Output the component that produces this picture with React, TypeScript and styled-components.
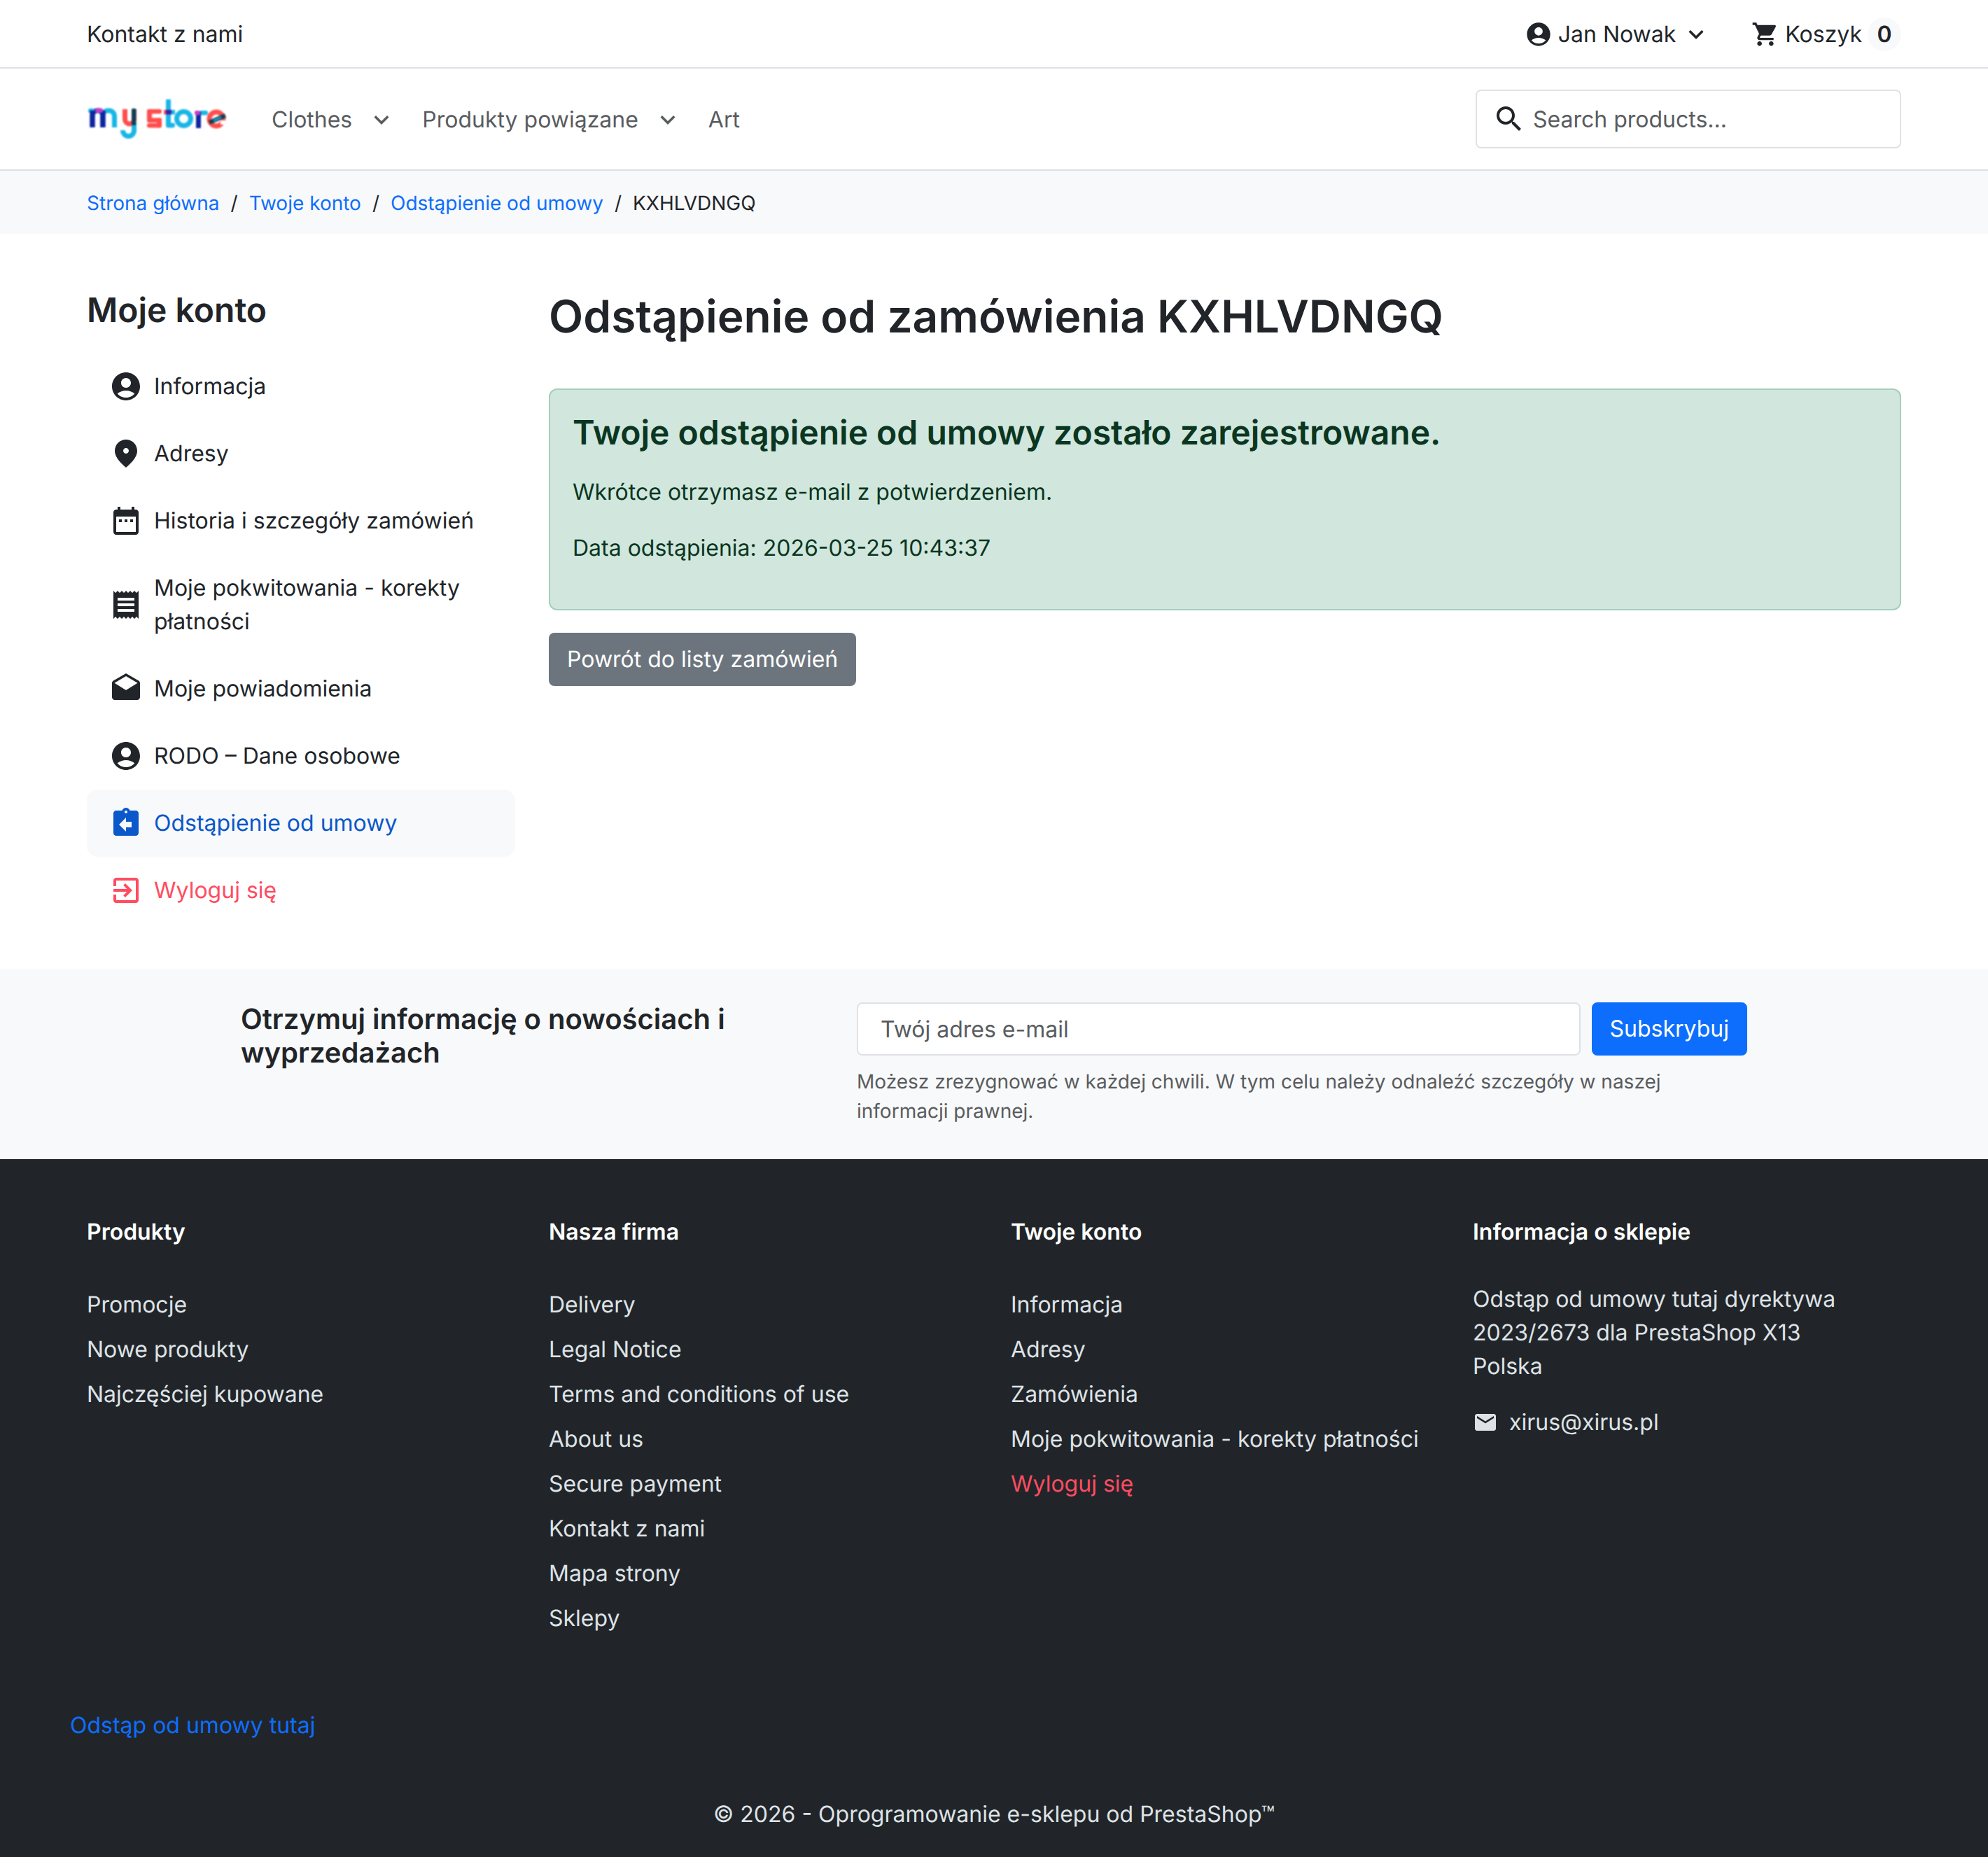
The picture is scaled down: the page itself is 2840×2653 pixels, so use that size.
import React from "react";
import styled, { createGlobalStyle } from "styled-components";

const Global = createGlobalStyle`
  html, body { margin: 0; padding: 0; background: #fff; }
  body { font-family: Inter, "Noto Sans", sans-serif; font-size: 32px; line-height: 48px; color: #212529; text-rendering: geometricPrecision; }
  * { box-sizing: border-box; }
  a { text-decoration: none; color: inherit; }
  ul { list-style: none; margin: 0; padding: 0; }
`;

const P = {
  account: "M12 2C6.48 2 2 6.48 2 12s4.48 10 10 10 10-4.48 10-10S17.52 2 12 2zm0 4c1.93 0 3.5 1.57 3.5 3.5S13.93 13 12 13s-3.5-1.57-3.5-3.5S10.07 6 12 6zm0 14c-2.03 0-4.43-.82-6.14-2.88C7.55 15.8 9.68 15 12 15s4.45.8 6.14 2.12C16.43 19.18 14.03 20 12 20z",
  place: "M12 2c-4.2 0-8 3.22-8 8.2 0 3.32 2.67 7.25 8 11.8 5.33-4.55 8-8.48 8-11.8C20 5.22 16.2 2 12 2zm0 10c-1.1 0-2-.9-2-2s.9-2 2-2 2 .9 2 2-.9 2-2 2z",
  date: "M9 11H7v2h2v-2zm4 0h-2v2h2v-2zm4 0h-2v2h2v-2zm2-7h-1V2h-2v2H8V2H6v2H5c-1.11 0-1.99.9-1.99 2L3 20c0 1.1.89 2 2 2h14c1.1 0 2-.9 2-2V6c0-1.1-.9-2-2-2zm0 16H5V9h14v11z",
  receipt: "M18 17H6v-2h12v2zm0-4H6v-2h12v2zm0-4H6V7h12v2zM3 22l1.5-1.5L6 22l1.5-1.5L9 22l1.5-1.5L12 22l1.5-1.5L15 22l1.5-1.5L18 22l1.5-1.5L21 22V2l-1.5 1.5L18 2l-1.5 1.5L15 2l-1.5 1.5L12 2l-1.5 1.5L9 2 7.5 3.5 6 2 4.5 3.5 3 2v20z",
  drafts: "M21.99 8c0-.72-.37-1.35-.94-1.7L12 1 2.95 6.3C2.38 6.65 2 7.28 2 8v10c0 1.1.9 2 2 2h16c1.1 0 2-.9 2-2l-.01-10zM12 13L3.74 7.84 12 3l8.26 4.84L12 13z",
  assignReturn: "M19 3h-4.18C14.4 1.84 13.3 1 12 1c-1.3 0-2.4.84-2.82 2H5c-1.1 0-2 .9-2 2v14c0 1.1.9 2 2 2h14c1.1 0 2-.9 2-2V5c0-1.1-.9-2-2-2zm-7 0c.55 0 1 .45 1 1s-.45 1-1 1-1-.45-1-1 .45-1 1-1zm4 12h-4v3l-5-5 5-5v3h4v4z",
  exit: "M10.09 15.59L11.5 17l5-5-5-5-1.41 1.41L12.67 11H3v2h9.67l-2.58 2.59zM19 3H5c-1.11 0-2 .9-2 2v4h2V5h14v14H5v-4H3v4c0 1.1.89 2 2 2h14c1.1 0 2-.9 2-2V5c0-1.1-.9-2-2-2z",
  cart: "M7 18c-1.1 0-1.99.9-1.99 2S5.9 22 7 22s2-.9 2-2-.9-2-2-2zM1 2v2h2l3.6 7.59-1.35 2.45c-.16.28-.25.61-.25.96 0 1.1.9 2 2 2h12v-2H7.42c-.14 0-.25-.11-.25-.25l.03-.12.9-1.63h7.45c.75 0 1.41-.41 1.75-1.03l3.58-6.49c.08-.14.12-.31.12-.48 0-.55-.45-1-1-1H5.21l-.94-2H1zm16 16c-1.1 0-1.99.9-1.99 2s.89 2 1.99 2 2-.9 2-2-.9-2-2-2z",
  search: "M15.5 14h-.79l-.28-.27C15.41 12.59 16 11.11 16 9.5 16 5.91 13.09 3 9.5 3S3 5.91 3 9.5 5.91 16 9.5 16c1.61 0 3.09-.59 4.23-1.57l.27.28v.79l5 4.99L20.49 19l-4.99-5zm-6 0C7.01 14 5 11.99 5 9.5S7.01 5 9.5 5 14 7.01 14 9.5 11.99 14 9.5 14z",
  email: "M20 4H4c-1.1 0-1.99.9-1.99 2L2 18c0 1.1.9 2 2 2h16c1.1 0 2-.9 2-2V6c0-1.1-.9-2-2-2zm0 4l-8 5-8-5V6l8 5 8-5v2z",
  expand: "M16.59 8.59L12 13.17 7.41 8.59 6 10l6 6 6-6z",
};

const Svg = styled.svg<{ $size: number }>`
  width: ${(p) => p.$size}px;
  height: ${(p) => p.$size}px;
  flex: none;
  fill: currentColor;
  display: block;
`;
const Icon = ({ d, size = 48 }: { d: string; size?: number }) => (
  <Svg $size={size} viewBox="0 0 24 24" aria-hidden="true"><path d={d} /></Svg>
);

const Container = styled.div`
  width: 2640px;
  margin: 0 auto;
  padding: 0 24px;
`;

const TopBar = styled.div`
  border-bottom: 2px solid #dee2e6;
`;
const TopRow = styled(Container)`
  height: 96px;
  padding-top: 2px;
  display: flex;
  align-items: center;
  justify-content: space-between;
`;
const TopActions = styled.div`
  display: flex;
  align-items: center;
`;
const UserBox = styled.a`
  display: flex;
  align-items: center;
  gap: 8px;
  margin-right: 58px;
`;
const CartBox = styled.a`
  display: flex;
  align-items: center;
  gap: 8px;
`;
const CartBadge = styled.span`
  width: 48px;
  height: 48px;
  border-radius: 50%;
  background: #f8f9fa;
  font-weight: 600;
  display: flex;
  align-items: center;
  justify-content: center;
`;

const Header = styled.header`
  border-bottom: 2px solid #dee2e6;
`;
const HeaderRow = styled(Container)`
  height: 144px;
  display: flex;
  align-items: center;
`;
const LogoLink = styled.a`
  display: block;
  flex: none;
  margin-right: 64px;
`;
const LogoSvg = styled.svg`
  display: block;
  width: 200px;
  height: 90px;
  filter: blur(0.9px);
`;
const Nav = styled.nav`
  display: flex;
  align-items: center;
  color: #595c5f;
  padding-top: 2px;
`;
const NavItem = styled.a`
  display: flex;
  align-items: center;
  margin-right: 37px;
`;
const NavChevron = styled.span`
  display: flex;
  margin-left: 21px;
`;
const SearchBox = styled.label`
  margin-left: auto;
  width: 608px;
  height: 84px;
  border: 2px solid #dee2e6;
  border-radius: 8px;
  display: flex;
  align-items: center;
  gap: 10px;
  padding-left: 22px;
`;
const SearchInput = styled.input`
  flex: 1;
  min-width: 0;
  border: 0;
  outline: 0;
  background: transparent;
  font: inherit;
  color: #212529;
  padding: 2px 0 0;
  &::placeholder { color: #595c5f; opacity: 1; }
`;

const CrumbBar = styled.div`
  background: #f8f9fa;
  height: 90px;
`;
const CrumbList = styled(Container).attrs({ as: "ol" })`
  height: 90px;
  list-style: none;
  display: flex;
  align-items: center;
  font-size: 28px;
  margin: 0 auto;
  padding-top: 2px;
`;
const Crumb = styled.li<{ $current?: boolean }>`
  color: ${(p) => (p.$current ? "#212529" : "#0d6efd")};
  &:not(:first-child)::before {
    content: "/";
    color: #212529;
    padding: 0 16px;
  }
`;

const Body = styled(Container)`
  display: grid;
  grid-template-columns: 612px 1fr;
  column-gap: 48px;
  padding-top: 80px;
  padding-bottom: 64px;
`;
const SideTitle = styled.h2`
  margin: 0 0 32px;
  font-size: 48px;
  line-height: 58px;
  font-weight: 600;
`;
const SideItem = styled.a<{ $tone?: "active" | "danger" }>`
  display: flex;
  align-items: center;
  gap: 16px;
  padding: 24px 32px;
  border-radius: 16px;
  background: ${(p) => (p.$tone === "active" ? "#f8f9fa" : "transparent")};
  color: ${(p) => (p.$tone === "active" ? "#0a58ca" : p.$tone === "danger" ? "#ff4c61" : "#212529")};
`;

const Title = styled.h1`
  margin: 0 0 64px;
  font-size: 64px;
  line-height: 77px;
  font-weight: 600;
`;
const Alert = styled.div`
  background: #d1e7dd;
  border: 2px solid #a3cfbb;
  border-radius: 12px;
  color: #0a3622;
  padding: 32px 32px 31px;
  margin-bottom: 32px;
`;
const AlertHeading = styled.h4`
  margin: 0 0 32px;
  font-size: 48px;
  line-height: 58px;
  font-weight: 600;
`;
const AlertText = styled.p`
  margin: 0 0 32px;
`;
const BackButton = styled.a`
  display: inline-block;
  background: #6c757d;
  border: 2px solid #6c757d;
  border-radius: 8px;
  color: #fff;
  padding: 12px 24px;
`;

const Newsletter = styled.section`
  background: #f8f9fa;
  padding: 48px 0;
`;
const NewsRow = styled.div`
  width: 2152px;
  margin: 0 auto;
  display: grid;
  grid-template-columns: 880px 1fr;
`;
const NewsTitle = styled.div`
  font-size: 40px;
  line-height: 48px;
  font-weight: 600;
  width: 820px;
`;
const NewsForm = styled.div`
  display: flex;
  gap: 16px;
`;
const NewsInput = styled.input`
  flex: 1;
  min-width: 0;
  height: 76px;
  border: 2px solid #dee2e6;
  border-radius: 8px;
  background: #fff;
  padding: 0 32px;
  font: inherit;
  &::placeholder { color: #595c5f; opacity: 1; }
`;
const NewsButton = styled.button`
  height: 76px;
  padding: 0 24px;
  border: 2px solid #0d6efd;
  border-radius: 8px;
  background: #0d6efd;
  color: #fff;
  font: inherit;
`;
const NewsNote = styled.p`
  margin: 16px 0 0;
  font-size: 28px;
  line-height: 42px;
  color: #595c5f;
  max-width: 1200px;
`;

const Footer = styled.footer`
  background: #212529;
  color: #dee2e6;
  padding: 80px 0 37px;
`;
const FooterInner = styled.div`
  width: 2640px;
  margin: 0 auto;
`;
const FooterCols = styled.div`
  display: grid;
  grid-template-columns: repeat(4, 660px);
  height: 705px;
`;
const FooterCol = styled.div`
  padding: 0 24px;
`;
const FooterHead = styled.div`
  color: #fff;
  font-weight: 600;
  margin-bottom: 48px;
`;
const FooterList = styled.ul`
  padding-top: 8px;
`;
const FooterLink = styled.li<{ $danger?: boolean }>`
  margin-bottom: 16px;
  color: ${(p) => (p.$danger ? "#ff4c61" : "#dee2e6")};
`;
const MailRow = styled.div`
  display: flex;
  align-items: center;
  gap: 16px;
  margin-top: 32px;
`;
const WithdrawLink = styled.a`
  display: block;
  color: #0d6efd;
`;
const Copyright = styled.div`
  text-align: center;
  margin-top: 79px;
`;

const Logo = () => (
  <LogoSvg viewBox="14 5 200 90" role="img" aria-label="my store">
    <defs>
      <clipPath id="logoYBowl"><rect x="60" y="36" width="30" height="26" /></clipPath>
      <clipPath id="logoYHook"><rect x="58" y="66" width="30" height="14" /></clipPath>
      <clipPath id="logoMArch"><rect x="14" y="34" width="46" height="28" /></clipPath>
    </defs>
    {/* m */}
    <g clipPath="url(#logoMArch)">
      <rect x="36.5" y="38" width="17" height="34" rx="8" fill="none" stroke="#18b6e6" strokeWidth="7" />
      <rect x="22" y="38" width="15" height="34" rx="7.5" fill="none" stroke="#0f249f" strokeWidth="7" />
    </g>
    <rect x="16" y="35" width="9" height="6.5" rx="3" fill="#18b6e6" />
    <rect x="18.5" y="38" width="7" height="23" fill="#0f249f" />
    <rect x="33.5" y="38" width="7" height="23" fill="#0f249f" />
    <rect x="26" y="34.5" width="11" height="6.5" rx="3" fill="#c03fc4" />
    {/* y */}
    <g clipPath="url(#logoYBowl)">
      <rect x="68.5" y="26" width="13" height="31" rx="6.5" fill="none" stroke="#ff4c4c" strokeWidth="7" />
    </g>
    <rect x="78" y="56" width="7" height="13" fill="#18b6e6" />
    <g clipPath="url(#logoYHook)">
      <rect x="65.5" y="56" width="16" height="18.5" rx="8" fill="none" stroke="#18b6e6" strokeWidth="7" />
    </g>
    <rect x="78" y="35" width="6.5" height="24" rx="2" fill="#0f3f52" />
    {/* s */}
    <rect x="100" y="36" width="21" height="6.5" rx="3" fill="#ff4c4c" />
    <rect x="100" y="36" width="7" height="19" rx="3" fill="#ff4c4c" />
    <rect x="100" y="48.5" width="21" height="6.5" rx="3" fill="#ff4c4c" />
    <rect x="114" y="48.5" width="7" height="14" rx="3" fill="#ff4c4c" />
    <rect x="100" y="56" width="21" height="6.5" rx="3" fill="#ff4c4c" />
    {/* t */}
    <rect x="127" y="22" width="7" height="38" fill="#18b6e6" />
    <rect x="127" y="55.5" width="13" height="7" rx="3.5" fill="#18b6e6" />
    <rect x="124" y="37" width="5" height="6.5" fill="#ff4c4c" />
    <rect x="127" y="37" width="8" height="6.5" fill="#3a1fa8" />
    <rect x="135" y="37" width="5" height="6.5" fill="#18b6e6" />
    {/* o */}
    <circle cx="152.5" cy="49.5" r="10" fill="none" stroke="#18b6e6" strokeWidth="7" />
    {/* r */}
    <rect x="175" y="38" width="12" height="6.5" rx="3" fill="#18b6e6" />
    <rect x="170" y="39" width="7" height="24" fill="#0f249f" />
    <rect x="168" y="38" width="8" height="6.5" rx="3" fill="#c03fc4" />
    {/* e */}
    <circle cx="199" cy="50" r="10" fill="none" stroke="#ff4c4c" strokeWidth="7" />
    <rect x="205" y="52" width="10" height="6" fill="#fff" />
    <line x1="189" y1="55" x2="212" y2="45" stroke="#0f3f52" strokeWidth="6" />
    <line x1="195" y1="52.5" x2="206" y2="47.5" stroke="#18b6e6" strokeWidth="2" />
  </LogoSvg>
);

const accountItems: { d: string; label: string; tone?: "active" | "danger" }[] = [
  { d: P.account, label: "Informacja" },
  { d: P.place, label: "Adresy" },
  { d: P.date, label: "Historia i szczegóły zamówień" },
  { d: P.receipt, label: "Moje pokwitowania - korekty płatności" },
  { d: P.drafts, label: "Moje powiadomienia" },
  { d: P.account, label: "RODO – Dane osobowe" },
  { d: P.assignReturn, label: "Odstąpienie od umowy", tone: "active" },
  { d: P.exit, label: "Wyloguj się", tone: "danger" },
];

const footerColumns: { title: string; links: string[] }[] = [
  { title: "Produkty", links: ["Promocje", "Nowe produkty", "Najczęściej kupowane"] },
  {
    title: "Nasza firma",
    links: ["Delivery", "Legal Notice", "Terms and conditions of use", "About us", "Secure payment", "Kontakt z nami", "Mapa strony", "Sklepy"],
  },
  {
    title: "Twoje konto",
    links: ["Informacja", "Adresy", "Zamówienia", "Moje pokwitowania - korekty płatności", "Wyloguj się"],
  },
];

export default function App() {
  return (
    <>
      <Global />
      <TopBar>
        <TopRow>
          <a href="#">Kontakt z nami</a>
          <TopActions>
            <UserBox href="#">
              <Icon d={P.account} size={40} />
              Jan Nowak
              <Icon d={P.expand} size={42} />
            </UserBox>
            <CartBox href="#">
              <Icon d={P.cart} size={40} />
              Koszyk
              <CartBadge>0</CartBadge>
            </CartBox>
          </TopActions>
        </TopRow>
      </TopBar>
      <Header>
        <HeaderRow>
          <LogoLink href="#"><Logo /></LogoLink>
          <Nav>
            <NavItem href="#">Clothes<NavChevron><Icon d={P.expand} size={42} /></NavChevron></NavItem>
            <NavItem href="#">Produkty powiązane<NavChevron><Icon d={P.expand} size={42} /></NavChevron></NavItem>
            <NavItem href="#">Art</NavItem>
          </Nav>
          <SearchBox>
            <Icon d={P.search} size={48} />
            <SearchInput placeholder="Search products..." />
          </SearchBox>
        </HeaderRow>
      </Header>
      <CrumbBar>
        <CrumbList>
          <Crumb>Strona główna</Crumb>
          <Crumb>Twoje konto</Crumb>
          <Crumb>Odstąpienie od umowy</Crumb>
          <Crumb $current>KXHLVDNGQ</Crumb>
        </CrumbList>
      </CrumbBar>
      <Body>
        <aside>
          <SideTitle>Moje konto</SideTitle>
          {accountItems.map((item) => (
            <SideItem href="#" key={item.label} $tone={item.tone}>
              <Icon d={item.d} />
              <span>{item.label}</span>
            </SideItem>
          ))}
        </aside>
        <main>
          <Title>Odstąpienie od zamówienia KXHLVDNGQ</Title>
          <Alert>
            <AlertHeading>Twoje odstąpienie od umowy zostało zarejestrowane.</AlertHeading>
            <AlertText>Wkrótce otrzymasz e-mail z potwierdzeniem.</AlertText>
            <AlertText>Data odstąpienia: 2026-03-25 10:43:37</AlertText>
          </Alert>
          <BackButton href="#">Powrót do listy zamówień</BackButton>
        </main>
      </Body>
      <Newsletter>
        <NewsRow>
          <NewsTitle>Otrzymuj informację o nowościach i wyprzedażach</NewsTitle>
          <div>
            <NewsForm>
              <NewsInput placeholder="Twój adres e-mail" />
              <NewsButton type="button">Subskrybuj</NewsButton>
            </NewsForm>
            <NewsNote>Możesz zrezygnować w każdej chwili. W tym celu należy odnaleźć szczegóły w naszej informacji prawnej.</NewsNote>
          </div>
        </NewsRow>
      </Newsletter>
      <Footer>
        <FooterInner>
          <FooterCols>
            {footerColumns.map((col) => (
              <FooterCol key={col.title}>
                <FooterHead>{col.title}</FooterHead>
                <FooterList>
                  {col.links.map((l) => (
                    <FooterLink key={l} $danger={l === "Wyloguj się"}>{l}</FooterLink>
                  ))}
                </FooterList>
              </FooterCol>
            ))}
            <FooterCol>
              <FooterHead>Informacja o sklepie</FooterHead>
              <div>Odstąp od umowy tutaj dyrektywa<br />2023/2673 dla PrestaShop X13<br />Polska</div>
              <MailRow><Icon d={P.email} size={36} />xirus@xirus.pl</MailRow>
            </FooterCol>
          </FooterCols>
          <WithdrawLink href="#">Odstąp od umowy tutaj</WithdrawLink>
          <Copyright>© 2026 - Oprogramowanie e-sklepu od PrestaShop™</Copyright>
        </FooterInner>
      </Footer>
    </>
  );
}
